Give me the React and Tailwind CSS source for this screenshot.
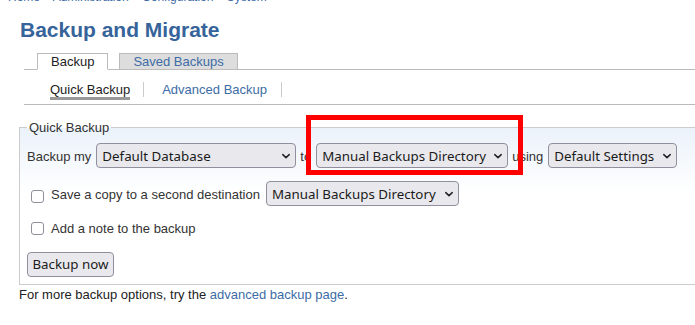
const LINK = "text-[#3d6ca6]";

function Chevron() {
  return (
    <svg width="10" height="10" viewBox="0 0 10 10" fill="none" stroke="#222" strokeWidth="1.5" strokeLinecap="round" strokeLinejoin="round" className="shrink-0">
      <path d="M1.8 3.6 5 6.6 8.2 3.6" />
    </svg>
  );
}

function Select({ label, className }) {
  return (
    <div className={"flex items-center justify-between h-[25px] shrink-0 border border-[#8f8f9d] rounded-[4px] bg-[#e9e9ed] pl-[5px] pr-[4px] text-[13.33px] text-[#1b1b1b] font-['Noto_Sans',sans-serif] " + className}>
      <span className="pt-[2px] leading-normal whitespace-nowrap">{label}</span>
      <Chevron />
    </div>
  );
}

function Checkbox({ className }) {
  return <span className={"block shrink-0 w-[13px] h-[13px] border border-[#8f8f9d] rounded-[3px] bg-white " + className} />;
}

export default function App() {
  return (
    <div className="relative w-[695px] h-[325px] overflow-hidden bg-white font-['Liberation_Sans',Arial,sans-serif] text-[13px] leading-[15px] text-[#333]">
      <div className={"ml-[8px] -mt-[10px] text-[12px] leading-[14px] whitespace-nowrap " + LINK}>
        Home » Administration » Configuration » System
      </div>
      <h1 className="ml-[20px] mt-[14px] text-[21px] leading-[24px] font-bold text-[#36639a]">Backup and Migrate</h1>

      <ul className="mt-[11px] ml-[24px] w-[700px] flex items-end gap-[11px] border-b border-[#bbb] pl-[13px]">
        <li className="mb-[-1px] h-[17px] border border-[#bbb] border-b-white bg-white px-[13px] text-[#222]">Backup</li>
        <li className={"mb-[-1px] h-[17px] border border-[#bbb] bg-[#ddd] px-[13px] " + LINK}>Saved Backups</li>
      </ul>

      <ul className="mt-[12px] ml-[24px] w-[700px] flex items-start border-b border-[#bbb] pl-[12px] pb-[4px]">
        <li className="flex items-start">
          <a className="ml-[14px] border-b-[3px] border-[#999] text-[#222]">Quick Backup</a>
          <span className="ml-[13px] h-[15px] w-px bg-[#ccc]" />
        </li>
        <li className="flex items-start">
          <a className={"ml-[18px] " + LINK}>Advanced Backup</a>
          <span className="ml-[14px] h-[15px] w-px bg-[#ccc]" />
        </li>
      </ul>

      <fieldset className="mt-[15px] ml-[19px] w-[700px] border border-[#ccc] pt-[8px] pb-[7px] pl-[7px] bg-[linear-gradient(#ebf2fa,#ffffff_65px)]">
        <legend className="px-[2px] leading-[15px] text-[#333]">Quick Backup</legend>

        <div className="flex items-baseline whitespace-nowrap">
          <span>Backup my</span>
          <Select label="Default Database" className="ml-[5px] mr-[4px] w-[200px]" />
          <span>to</span>
          <Select label="Manual Backups Directory" className="ml-[5px] mr-[4px] w-[192px]" />
          <span>using</span>
          <Select label="Default Settings" className="ml-[5px] w-[129px]" />
        </div>

        <div className="mt-[13px] flex items-baseline whitespace-nowrap">
          <Checkbox className="self-center ml-[4px] mr-[7px] mt-[5px]" />
          <span>Save a copy to a second destination</span>
          <Select label="Manual Backups Directory" className="ml-[6px] w-[193px]" />
        </div>

        <div className="mt-[15px] h-[15px] flex items-center whitespace-nowrap">
          <Checkbox className="ml-[4px] mr-[7px]" />
          <span>Add a note to the backup</span>
        </div>

        <button className="mt-[16px] flex items-center justify-center w-[87px] h-[25px] border border-[#8f8f9d] rounded-[4px] bg-[#e9e9ed] text-[13.33px] text-[#1b1b1b] font-['Noto_Sans',sans-serif] leading-normal">
          Backup now
        </button>
      </fieldset>

      <p className="ml-[19px] mt-[2px] text-[#222] whitespace-nowrap">
        For more backup options, try the <a className={LINK}>advanced backup page</a>.
      </p>

      <div className="absolute left-[306px] top-[115px] w-[217px] h-[60px] border-[5px] border-[#ff0000]" />
    </div>
  );
}
